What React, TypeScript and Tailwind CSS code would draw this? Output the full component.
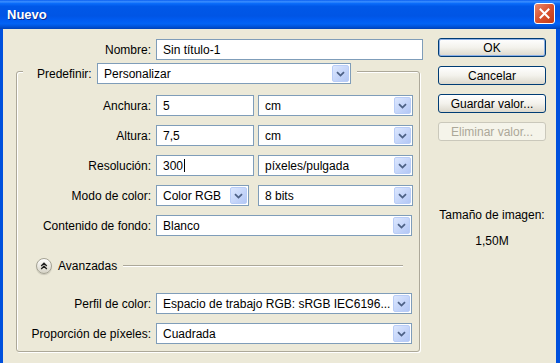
import type { ReactNode } from 'react';

// Windows XP style "Nuevo" dialog (Photoshop new document)

const FIELD = 'flex h-[21px] items-center border border-[#7f9db9] bg-white';

function DropArrow() {
  return (
    <span className="flex h-[17px] w-[17px] shrink-0 items-center justify-center rounded-[2px] border border-[#b9cdf7] bg-gradient-to-br from-[#dce7fe] to-[#b3c7f5]">
      <svg width="9" height="6" viewBox="0 0 9 6">
        <path d="M1 1.2 4.5 4.6 8 1.2" fill="none" stroke="#4d6185" strokeWidth="1.8" />
      </svg>
    </span>
  );
}

function Select({ value, className }: { value: string; className: string }) {
  return (
    <div className={`${FIELD} p-px ${className}`}>
      <span className="min-w-0 flex-1 overflow-hidden whitespace-nowrap pl-[5px]">{value}</span>
      <DropArrow />
    </div>
  );
}

function Input({ children, className }: { children: ReactNode; className: string }) {
  return <div className={`${FIELD} pl-[6px] ${className}`}>{children}</div>;
}

function Row({ label, children, className = '' }: { label: string; children: ReactNode; className?: string }) {
  return (
    <div className={`flex h-[21px] items-center gap-[5px] ${className}`}>
      <span className="w-[134px] whitespace-nowrap text-right">{label}</span>
      {children}
    </div>
  );
}

function XpButton({ label, isDefault, disabled }: { label: string; isDefault?: boolean; disabled?: boolean }) {
  if (disabled) {
    return (
      <div className="flex h-[19px] items-center justify-center rounded-[3px] border border-[#cac8bb] bg-[#f5f4ea] text-[#aca899]">
        {label}
      </div>
    );
  }
  return (
    <div
      className={`flex h-[19px] items-center justify-center rounded-[3px] border border-[#003c74] bg-gradient-to-b from-white via-[#f3f2ec] to-[#dcd8cc] ${
        isDefault ? 'shadow-[inset_0_0_0_1px_#8cb0e6]' : ''
      }`}
    >
      {label}
    </div>
  );
}

export default function App() {
  return (
    <div className="flex h-[363px] w-[560px] flex-col overflow-hidden bg-[#0050dd] font-['Liberation_Sans',Arial,sans-serif] text-[12px] text-black">
      {/* title bar */}
      <div className="flex h-[29px] shrink-0 items-start justify-between bg-[linear-gradient(180deg,#0a5ef0_0%,#3b8fff_6%,#0a6cfa_12%,#0058e8_22%,#0055e5_55%,#005cf2_70%,#0263f5_82%,#0052d8_92%,#0042b8_100%)] pr-[5px] pt-[3px]">
        <span className="pl-[7px] pt-[4px] text-[13px] font-bold leading-[15px] text-white [text-shadow:1px_1px_0_#0b2a8c]">
          Nuevo
        </span>
        <span className="flex h-[21px] w-[21px] items-center justify-center rounded-[3px] border border-white bg-gradient-to-br from-[#e9876a] via-[#d9512f] to-[#c23a14]">
          <svg width="11" height="11" viewBox="0 0 11 11">
            <path d="M1.5 1.5 9.5 9.5M9.5 1.5 1.5 9.5" stroke="#fff" strokeWidth="2" strokeLinecap="square" />
          </svg>
        </span>
      </div>

      {/* body */}
      <div className="ml-[3px] mr-[4px] flex flex-1 bg-[#ece9d8] pl-[13px]">
        <div className="mt-[10px] flex w-[407px] flex-col">
          <div className="flex h-[21px] items-center gap-[5px]">
            <span className="w-[135px] text-right">Nombre:</span>
            <Input className="w-[267px]">Sin título-1</Input>
          </div>

          <div className="mt-[11px] flex w-[404px] flex-col rounded-[3px] border border-[#aca899] pb-[7px] shadow-[inset_1px_1px_0_#fff,1px_1px_0_#fff]">
            <div className="-mt-[9px] ml-[6px] flex h-[21px] items-center gap-[5px] self-start bg-[#ece9d8] pl-[14px] pr-[6px]">
              <span className="w-[55px] whitespace-nowrap">Predefinir:</span>
              <Select value="Personalizar" className="w-[254px]" />
            </div>

            <Row label="Anchura:" className="mt-[11px]">
              <Input className="w-[98px]">5</Input>
              <Select value="cm" className="ml-[-1px] w-[155px]" />
            </Row>
            <Row label="Altura:" className="mt-[9px]">
              <Input className="w-[98px]">7,5</Input>
              <Select value="cm" className="ml-[-1px] w-[155px]" />
            </Row>
            <Row label="Resolución:" className="mt-[9px]">
              <Input className="w-[98px]">
                300
                <span className="ml-px inline-block h-[13px] w-px bg-black" />
              </Input>
              <Select value="píxeles/pulgada" className="ml-[-1px] w-[155px]" />
            </Row>
            <Row label="Modo de color:" className="mt-[9px]">
              <Select value="Color RGB" className="w-[93px]" />
              <Select value="8 bits" className="ml-[4px] w-[155px]" />
            </Row>
            <Row label="Contenido de fondo:" className="mt-[9px]">
              <Select value="Blanco" className="w-[256px]" />
            </Row>

            <div className="mt-[22px] flex h-[16px] items-center">
              <span className="ml-[19px] flex h-[16px] w-[16px] items-center justify-center rounded-full border border-[#a5a394] bg-gradient-to-b from-white to-[#d6d3c6] shadow-[0_1px_1px_rgba(0,0,0,0.15)]">
                <svg width="8" height="8" viewBox="0 0 8 8">
                  <path d="M1.2 4 4 1.2 6.8 4M1.2 7 4 4.2 6.8 7" fill="none" stroke="#1e1e1e" strokeWidth="1.3" />
                </svg>
              </span>
              <span className="ml-[6px]">Avanzadas</span>
              <div className="ml-[6px] mr-[16px] h-[2px] flex-1 border-t border-b border-t-[#aca899] border-b-white" />
            </div>

            <Row label="Perfil de color:" className="mt-[19px]">
              <Select value="Espacio de trabajo RGB: sRGB IEC6196..." className="w-[256px]" />
            </Row>
            <Row label="Proporción de píxeles:" className="mt-[9px]">
              <Select value="Cuadrada" className="w-[256px]" />
            </Row>
          </div>
        </div>

        <div className="ml-[15px] mt-[9px] flex w-[108px] flex-col">
          <div className="flex flex-col gap-[9px]">
            <XpButton label="OK" isDefault />
            <XpButton label="Cancelar" />
            <XpButton label="Guardar valor..." />
            <XpButton label="Eliminar valor..." disabled />
          </div>
          <p className="mt-[67px] whitespace-nowrap text-center leading-[14px]">Tamaño de imagen:</p>
          <p className="mt-[12px] text-center leading-[14px]">1,50M</p>
        </div>
      </div>
    </div>
  );
}
